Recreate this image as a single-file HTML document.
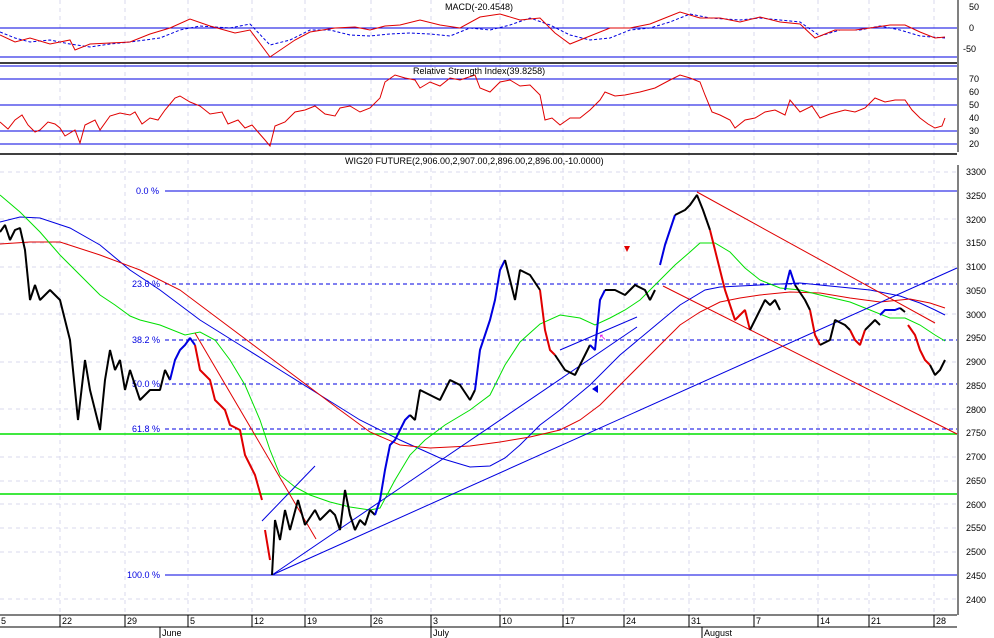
<!DOCTYPE html>
<html><head><meta charset="utf-8"><style>
html,body{margin:0;padding:0;background:#fff;}
svg{display:block;font-family:"Liberation Sans",sans-serif;}
</style></head><body>
<svg width="994" height="638" viewBox="0 0 994 638" xmlns="http://www.w3.org/2000/svg">
<rect width="994" height="638" fill="#fff"/>
<!-- vertical grid -->
<g stroke="#d8d8ee" stroke-dasharray="4,4" stroke-width="1">
<line x1="60" y1="0" x2="60" y2="615"/><line x1="125" y1="0" x2="125" y2="615"/><line x1="188" y1="0" x2="188" y2="615"/><line x1="252" y1="0" x2="252" y2="615"/><line x1="305" y1="0" x2="305" y2="615"/><line x1="371" y1="0" x2="371" y2="615"/><line x1="431" y1="0" x2="431" y2="615"/><line x1="500" y1="0" x2="500" y2="615"/><line x1="563" y1="0" x2="563" y2="615"/><line x1="624" y1="0" x2="624" y2="615"/><line x1="689" y1="0" x2="689" y2="615"/><line x1="754" y1="0" x2="754" y2="615"/><line x1="818" y1="0" x2="818" y2="615"/><line x1="869" y1="0" x2="869" y2="615"/><line x1="934" y1="0" x2="934" y2="615"/>
</g>
<g stroke="#d8d8ee" stroke-dasharray="4,4">
<line x1="0" y1="172" x2="957" y2="172"/><line x1="0" y1="219" x2="957" y2="219"/><line x1="0" y1="243" x2="957" y2="243"/><line x1="0" y1="267" x2="957" y2="267"/><line x1="0" y1="314" x2="957" y2="314"/><line x1="0" y1="362" x2="957" y2="362"/><line x1="0" y1="409" x2="957" y2="409"/><line x1="0" y1="457" x2="957" y2="457"/><line x1="0" y1="481" x2="957" y2="481"/><line x1="0" y1="504" x2="957" y2="504"/><line x1="0" y1="528" x2="957" y2="528"/><line x1="0" y1="552" x2="957" y2="552"/><line x1="0" y1="599" x2="957" y2="599"/>
</g>
<!-- MACD panel -->
<line x1="0" y1="28" x2="957" y2="28" stroke="#0000e0"/>
<line x1="0" y1="57" x2="957" y2="57" stroke="#0000e0"/>
<polyline fill="none" stroke="#0000e0" stroke-dasharray="3,2" points="0,32 15,38 30,42 50,40 70,44 90,47 110,44 130,42 160,38 180,30 200,26 230,28 250,24 270,45 290,40 310,30 330,30 350,35 370,36 390,34 410,33 430,34 450,36 470,28 490,30 510,25 530,18 550,25 570,35 590,40 610,38 630,30 650,28 670,22 690,14 710,18 740,20 760,18 780,20 800,22 820,36 840,30 860,30 880,26 900,30 920,36 945,38"/>
<polyline fill="none" stroke="#e00000" points="0,35 15,42 30,38 50,44 70,40 75,50 90,44 110,43 130,42 150,34 170,28 190,19 210,26 235,33 250,30 270,57 295,40 310,32 335,28 355,27 370,30 385,26 400,25 420,20 440,25 460,28 480,17 500,14 520,20 540,18 555,33 570,44 590,36 610,28 630,28 650,24 665,18 680,12 700,18 720,18 740,22 760,17 780,22 800,24 815,38 835,30 855,30 870,28 890,25 905,25 920,32 935,38 945,37"/>
<text x="445" y="10" font-size="9">MACD(-20.4548)</text>
<line x1="0" y1="63" x2="957" y2="63" stroke="#000" stroke-width="1.5"/>
<line x1="0" y1="66" x2="957" y2="66" stroke="#0000e0"/>
<!-- RSI panel -->
<g stroke="#0000e0"><line x1="0" y1="79" x2="957" y2="79"/><line x1="0" y1="105" x2="957" y2="105"/><line x1="0" y1="131" x2="957" y2="131"/><line x1="0" y1="144" x2="957" y2="144"/></g>
<polyline fill="none" stroke="#e00000" points="0,122 8,129 15,120 22,115 28,125 35,132 40,130 48,122 55,124 60,128 65,136 75,130 80,143 85,125 95,120 100,130 110,116 120,113 130,115 135,112 142,124 150,118 158,120 165,110 175,98 180,96 190,102 200,106 210,114 222,112 228,124 238,120 245,128 252,125 258,132 265,140 270,146 275,126 285,122 295,112 305,110 315,106 325,114 335,116 340,108 350,106 360,112 370,108 380,98 385,82 395,75 405,78 415,80 420,88 430,82 440,86 450,78 460,80 475,75 480,88 490,92 500,82 510,80 520,86 530,85 540,95 545,120 552,118 560,125 570,118 580,118 590,110 600,100 605,92 615,96 625,95 640,92 655,88 670,80 680,75 690,78 700,82 705,95 712,112 720,115 730,120 735,128 745,120 755,118 765,112 775,110 785,115 790,100 800,112 812,106 820,118 830,114 845,110 855,112 865,108 875,98 885,102 895,100 905,100 912,110 920,118 928,124 935,128 942,126 945,118"/>
<text x="413" y="74" font-size="9">Relative Strength Index(39.8258)</text>
<line x1="0" y1="154" x2="957" y2="154" stroke="#000" stroke-width="1.5"/>
<text x="345" y="164" font-size="9">WIG20 FUTURE(2,906.00,2,907.00,2,896.00,2,896.00,-10.0000)</text>
<!-- fib lines -->
<line x1="165" y1="191" x2="957" y2="191" stroke="#0000e0"/>
<g stroke="#0000e0" stroke-dasharray="4,3">
<line x1="165" y1="284" x2="957" y2="284"/><line x1="165" y1="340" x2="957" y2="340"/><line x1="165" y1="384" x2="957" y2="384"/><line x1="165" y1="429" x2="957" y2="429"/>
</g>
<line x1="165" y1="575" x2="957" y2="575" stroke="#0000e0"/>
<line x1="0" y1="434" x2="957" y2="434" stroke="#00e000" stroke-width="1.5"/>
<line x1="0" y1="494" x2="957" y2="494" stroke="#00e000" stroke-width="1.5"/>
<g fill="#0000e0" font-size="9">
<text x="136" y="194">0.0 %</text><text x="132" y="287">23.6 %</text><text x="132" y="343">38.2 %</text><text x="132" y="387">50.0 %</text><text x="132" y="432">61.8 %</text><text x="127" y="578">100.0 %</text>
</g>
<!-- MAs -->
<polyline fill="none" stroke="#0000e0" points="0,222 20,217 40,218 70,228 100,245 130,270 160,290 200,320 240,345 280,370 320,395 360,420 400,440 440,458 470,467 490,466 505,458 520,445 540,425 560,410 590,385 620,355 650,330 680,305 705,290 720,287 760,285 800,283 840,287 870,290 900,296 920,303 935,310 945,315"/>
<polyline fill="none" stroke="#e00000" points="0,244 30,242 60,242 100,255 140,270 180,290 220,320 260,350 300,380 340,410 370,432 400,445 430,448 470,446 500,442 530,437 560,430 580,420 600,405 620,385 640,365 660,345 680,325 700,312 720,302 740,298 760,295 790,292 820,293 850,298 880,302 910,299 930,303 945,308"/>
<polyline fill="none" stroke="#00e000" points="0,195 20,212 40,232 60,255 80,275 100,295 115,305 130,316 140,320 160,325 185,335 200,332 215,340 230,360 245,385 260,420 270,450 280,475 295,487 310,495 330,502 350,507 370,510 380,508 395,480 410,455 425,440 445,425 470,410 490,395 505,365 520,342 540,324 560,315 580,318 595,325 610,318 625,310 640,300 655,285 675,265 690,252 700,243 715,243 730,252 745,268 760,280 780,288 800,290 820,295 850,302 870,310 890,318 905,318 920,325 935,335 945,341"/>
<!-- trend lines -->
<g fill="none" stroke-width="1">
<line x1="272" y1="575" x2="957" y2="268" stroke="#0000e0"/>
<line x1="272" y1="575" x2="637" y2="327" stroke="#0000e0"/>
<line x1="262" y1="521" x2="315" y2="466" stroke="#0000e0"/>
<line x1="560" y1="350" x2="637" y2="317" stroke="#0000e0"/>
<line x1="195" y1="333" x2="316" y2="539" stroke="#e00000"/>
<line x1="697" y1="192" x2="935" y2="323" stroke="#e00000"/>
<line x1="663" y1="286" x2="957" y2="434" stroke="#e00000"/>
</g>
<!-- price bars -->
<g fill="none" stroke-width="2" stroke-linejoin="bevel">
<polyline stroke="#000" points="0,232 5,225 10,240 15,230 20,228 25,250 30,300 35,285 40,300 50,290 60,300 65,320 70,340 78,420 85,360 90,390 100,430 105,380 110,350 115,370 120,360 125,390 130,370 140,400 150,390 160,390 165,370 170,380"/>
<polyline stroke="#0000e0" points="170,380 175,360 180,350 185,345 190,338 195,345"/>
<polyline stroke="#e00000" points="195,345 200,370 210,380 215,400 225,410 230,425 240,430 245,455 255,475 262,500"/>
<polyline stroke="#e00000" points="265,530 270,560"/>
<polyline stroke="#000" points="272,575 275,520 280,540 285,510 290,530 298,500 305,525 315,510 320,520 330,510 335,515 340,530 345,490 350,515 355,530 360,520 365,525 370,510 375,515"/>
<polyline stroke="#0000e0" points="375,515 380,500 385,470 390,445 395,440 400,430 405,420 410,415"/>
<polyline stroke="#000" points="410,415 415,420 420,390 430,395 440,400 450,380 460,385 470,400 475,390"/>
<polyline stroke="#0000e0" points="475,390 480,350 490,320 495,300 500,270 505,260"/>
<polyline stroke="#000" points="505,260 510,280 515,300 520,270 530,275 540,290"/>
<polyline stroke="#e00000" points="540,290 545,330 550,350 555,355"/>
<polyline stroke="#000" points="555,355 565,370 575,375 585,355 590,345"/>
<polyline stroke="#0000e0" points="590,345 595,350 600,300 605,290"/>
<polyline stroke="#000" points="605,290 615,290 625,295 635,285 645,290 650,300 655,290"/>
<polyline stroke="#0000e0" points="660,265 665,245 670,230 675,215"/>
<polyline stroke="#000" points="675,215 685,210 690,205 697,195 703,210 710,230"/>
<polyline stroke="#e00000" points="710,230 715,250 720,270 725,290 730,305 735,320 740,315 745,310 750,330"/>
<polyline stroke="#000" points="750,330 760,310 765,300 770,305 775,300 780,310"/>
<polyline stroke="#0000e0" points="785,290 790,270 795,285"/>
<polyline stroke="#000" points="795,285 805,300 810,310"/>
<polyline stroke="#e00000" points="810,310 815,335 820,345"/>
<polyline stroke="#000" points="820,345 830,340 835,320 845,325 850,330"/>
<polyline stroke="#e00000" points="850,330 855,340 860,345 865,330"/>
<polyline stroke="#000" points="865,330 875,320 880,325"/>
<polyline stroke="#0000e0" points="880,315 885,310 895,310 900,308"/>
<polyline stroke="#000" points="900,308 905,312"/>
<polyline stroke="#e00000" points="908,325 915,335 920,350 925,360 930,365"/>
<polyline stroke="#000" points="930,365 935,375 940,370 945,360"/>
</g>
<polygon points="624,246 630,246 627,252" fill="#e00000"/>
<polygon points="592,389 598,385 598,393" fill="#0000e0"/>
<text x="599" y="340" fill="#e000e0" font-size="9">↖</text>
<!-- right axis -->
<line x1="958" y1="165" x2="958" y2="615" stroke="#000"/>
<line x1="958" y1="0" x2="958" y2="152" stroke="#000"/>
<g font-size="9" fill="#000">
<text x="969" y="10">50</text><text x="969" y="31">0</text><text x="963" y="52">-50</text>
<text x="969" y="82">70</text><text x="969" y="95">60</text><text x="969" y="108">50</text><text x="969" y="121">40</text><text x="969" y="134">30</text><text x="969" y="147">20</text>
<text x="966" y="175">3300</text><text x="966" y="199">3250</text><text x="966" y="223">3200</text><text x="966" y="246">3150</text><text x="966" y="270">3100</text><text x="966" y="294">3050</text><text x="966" y="318">3000</text><text x="966" y="341">2950</text><text x="966" y="365">2900</text><text x="966" y="389">2850</text><text x="966" y="413">2800</text><text x="966" y="436">2750</text><text x="966" y="460">2700</text><text x="966" y="484">2650</text><text x="966" y="508">2600</text><text x="966" y="531">2550</text><text x="966" y="555">2500</text><text x="966" y="579">2450</text><text x="966" y="603">2400</text>
</g>
<!-- bottom axis -->
<line x1="0" y1="615" x2="957" y2="615" stroke="#000"/>
<line x1="0" y1="627" x2="957" y2="627" stroke="#000"/>
<g stroke="#000">
<line x1="60" y1="615" x2="60" y2="627"/><line x1="125" y1="615" x2="125" y2="627"/><line x1="188" y1="615" x2="188" y2="627"/><line x1="252" y1="615" x2="252" y2="627"/><line x1="305" y1="615" x2="305" y2="627"/><line x1="371" y1="615" x2="371" y2="627"/><line x1="431" y1="615" x2="431" y2="627"/><line x1="500" y1="615" x2="500" y2="627"/><line x1="563" y1="615" x2="563" y2="627"/><line x1="624" y1="615" x2="624" y2="627"/><line x1="689" y1="615" x2="689" y2="627"/><line x1="754" y1="615" x2="754" y2="627"/><line x1="818" y1="615" x2="818" y2="627"/><line x1="869" y1="615" x2="869" y2="627"/><line x1="934" y1="615" x2="934" y2="627"/>
<line x1="160" y1="627" x2="160" y2="638"/><line x1="431" y1="627" x2="431" y2="638"/><line x1="702" y1="627" x2="702" y2="638"/>
</g>
<g font-size="9">
<text x="1" y="624">5</text><text x="62" y="624">22</text><text x="127" y="624">29</text><text x="190" y="624">5</text><text x="254" y="624">12</text><text x="307" y="624">19</text><text x="373" y="624">26</text><text x="433" y="624">3</text><text x="502" y="624">10</text><text x="565" y="624">17</text><text x="626" y="624">24</text><text x="691" y="624">31</text><text x="756" y="624">7</text><text x="820" y="624">14</text><text x="871" y="624">21</text><text x="936" y="624">28</text>
<text x="162" y="636">June</text><text x="433" y="636">July</text><text x="704" y="636">August</text>
</g>
</svg>
</body></html>
